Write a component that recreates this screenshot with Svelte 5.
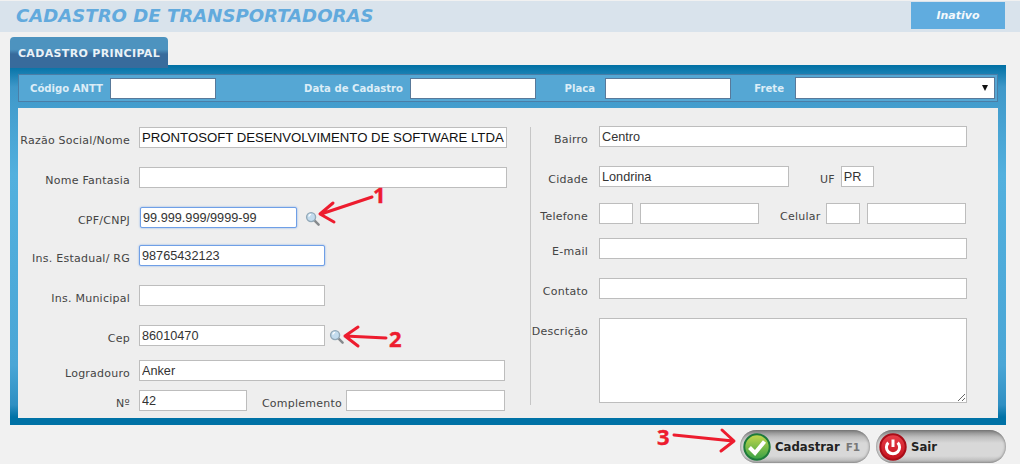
<script lang="ts">
  // annotation arrows drawn over the form
  const arrows = [
    { d: 'M372 197 L321 214 M333 203 L320 214 L334 222' },
    { d: 'M386 338 L345 336 M358 327 L345 336 L358 346' },
    { d: 'M674 435 L733 441 M722 430 L734 441 L721 451' },
  ];
</script>

<div class="page">
  <header class="topbar">
    <h1>CADASTRO DE TRANSPORTADORAS</h1>
    <span class="status">Inativo</span>
  </header>

  <nav class="tabs"><span class="tab">CADASTRO PRINCIPAL</span></nav>

  <section class="panel">
    <div class="filters">
      <label class="f1">Código ANTT <input class="w106" /></label>
      <label class="f2">Data de Cadastro <input class="w126" /></label>
      <label class="f3">Placa <input class="w126" /></label>
      <label class="f4">Frete
        <span class="select"><i></i></span>
      </label>
    </div>

    <div class="content">
      <div class="col left">
        <div class="row"><label>Razão Social/Nome</label><input class="w368 strong" value="PRONTOSOFT DESENVOLVIMENTO DE SOFTWARE LTDA" /></div>
        <div class="row"><label>Nome Fantasia</label><input class="w368" /></div>
        <div class="row">
          <label>CPF/CNPJ</label><input class="w157 focus" value="99.999.999/9999-99" />
          <svg class="lens cpf" viewBox="0 0 16 16" width="15" height="15">
            <path d="M10 10 L14.5 14.5" stroke="#85898c" stroke-width="2.6" stroke-linecap="round" />
            <circle cx="6.5" cy="6.5" r="4.8" fill="#c3dcee" stroke="#93a9b8" stroke-width="1.5" />
            <path d="M4 6 A3 3 0 0 1 6.5 3.6" fill="none" stroke="#fff" stroke-width="1.2" />
          </svg>
        </div>
        <div class="row"><label>Ins. Estadual/ RG</label><input class="w186 focus" value="98765432123" /></div>
        <div class="row"><label>Ins. Municipal</label><input class="w186" /></div>
        <div class="row">
          <label>Cep</label><input class="w186" value="86010470" />
          <svg class="lens" viewBox="0 0 16 16" width="15" height="15">
            <path d="M10 10 L14.5 14.5" stroke="#85898c" stroke-width="2.6" stroke-linecap="round" />
            <circle cx="6.5" cy="6.5" r="4.8" fill="#c3dcee" stroke="#93a9b8" stroke-width="1.5" />
            <path d="M4 6 A3 3 0 0 1 6.5 3.6" fill="none" stroke="#fff" stroke-width="1.2" />
          </svg>
        </div>
        <div class="row"><label>Logradouro</label><input class="w366" value="Anker" /></div>
        <div class="row">
          <label>Nº</label><input class="w108" value="42" />
          <label class="inline">Complemento</label><input class="w159" />
        </div>
      </div>

      <div class="col right">
        <div class="row"><label>Bairro</label><input class="w368" value="Centro" /></div>
        <div class="row">
          <label>Cidade</label><input class="w190" value="Londrina" />
          <label class="uf">UF</label><input class="w33" value="PR" />
        </div>
        <div class="row">
          <label>Telefone</label><input class="w34" />
          <input class="w119" />
          <label class="cel">Celular</label><input class="w34" />
          <input class="w99" />
        </div>
        <div class="row"><label>E-mail</label><input class="w368" /></div>
        <div class="row"><label>Contato</label><input class="w368" /></div>
        <div class="row"><label>Descrição</label><textarea></textarea></div>
      </div>
    </div>
  </section>

  <footer class="actions">
    <button>
      <svg viewBox="0 0 28 28" width="28" height="28">
        <defs>
          <linearGradient id="ok" x1="0" y1="0" x2="0" y2="1">
            <stop offset="0" stop-color="#c5d94c" />
            <stop offset="1" stop-color="#36a045" />
          </linearGradient>
        </defs>
        <circle cx="14" cy="14" r="12.7" fill="url(#ok)" stroke="#1d7a3a" stroke-width="2" />
        <path d="M6.5 14.5 L12 20 L21.5 8.5" fill="none" stroke="#fff" stroke-width="4" />
      </svg>
      <b>Cadastrar</b><small>F1</small>
    </button>
    <button>
      <svg viewBox="0 0 28 28" width="28" height="28">
        <defs>
          <linearGradient id="off" x1="0" y1="0" x2="0" y2="1">
            <stop offset="0" stop-color="#e8404a" />
            <stop offset="1" stop-color="#c4101c" />
          </linearGradient>
        </defs>
        <circle cx="14" cy="14" r="12.7" fill="url(#off)" stroke="#a80d18" stroke-width="2" />
        <path d="M9.3 9.6 A6.6 6.6 0 1 0 18.7 9.6" fill="none" stroke="#fff" stroke-width="3" />
        <path d="M14 6.5 V14" stroke="#fff" stroke-width="3" />
      </svg>
      <b>Sair</b>
    </button>
  </footer>

  <!-- annotations sit on top of the screen -->
  <svg class="marks" width="1020" height="464">
    {#each arrows as a}
      <path d={a.d} fill="none" stroke="#ed1c2e" stroke-width="3" stroke-linecap="round" stroke-linejoin="round" />
    {/each}
  </svg>
  <span class="num n1">1</span>
  <span class="num n2">2</span>
  <span class="num n3">3</span>
</div>

<style>
  :global(body) {
    margin: 0;
    background: #f1f1f1;
  }

  .page {
    position: relative;
    width: 1020px;
    height: 464px;
    overflow: hidden;
    font-family: "DejaVu Sans", sans-serif;
    font-size: 11px;
    color: #444;
  }

  .topbar {
    display: flex;
    justify-content: space-between;
    margin-top: 1px;
    height: 31px;
    padding: 1px 15px 0 16px;
    box-sizing: border-box;
    background: #d9e3ec;
  }

  h1 {
    margin: 3px 0 0;
    font-size: 18.1px;
    line-height: 22px;
    font-weight: bold;
    font-style: italic;
    color: #62aadd;
  }

  .status {
    width: 94px;
    height: 27px;
    background: #60acdf;
    color: #f4f9fc;
    font-size: 11px;
    font-weight: bold;
    font-style: italic;
    text-align: center;
    line-height: 27px;
  }

  .tabs {
    height: 33px;
    padding: 5px 0 0 10px;
    box-sizing: border-box;
    position: relative;
    z-index: 1;
  }

  .tab {
    display: block;
    width: 158px;
    height: 31px;
    box-sizing: border-box;
    padding-top: 10px;
    border-radius: 4px 4px 0 0;
    background: linear-gradient(#4d93bf 0, #4d93bf 40%, #386b9c 55%, #386b9c 100%);
    color: #e9f1f7;
    font-size: 11px;
    letter-spacing: 0.35px;
    font-weight: bold;
    text-align: center;
    line-height: 14px;
  }

  .panel {
    width: 996px;
    height: 360px;
    margin: 0 0 0 10px;
    padding: 9px 8px 7px;
    box-sizing: border-box;
    background: linear-gradient(#0070a4 0, #3f98c9 22px, #52b0de 110px, #4aa6d6 300px, #2f8fc2 340px, #0072a6 352px);
  }

  .filters {
    display: flex;
    height: 28px;
    box-sizing: border-box;
    border: 1px solid #4a7ea7;
    background: #55a7d4;
    color: #dcedf7;
    font-size: 10.1px;
    font-weight: bold;
  }

  .filters label {
    display: flex;
    align-items: center;
    justify-content: flex-end;
    gap: 7px;
    white-space: nowrap;
  }

  .filters input {
    height: 21px;
    border: 1px solid #58799a;
    background: #fff;
    box-sizing: border-box;
  }

  .f1 { width: 197px; }
  .f2 { width: 320px; }
  .f3 { width: 195px; gap: 10px !important; }
  .f4 { width: 264px; gap: 11px !important; }

  .select {
    display: block;
    position: relative;
    width: 200px;
    height: 22px;
    box-sizing: border-box;
    border: 1px solid #58799a;
    background: #fff;
  }

  .select i {
    position: absolute;
    right: 6px;
    top: 7px;
    border: 3px solid transparent;
    border-top: 6px solid #111;
    border-bottom: 0;
  }

  .content {
    display: flex;
    height: 310px;
    margin-top: 6px;
    background: #eee;
    box-sizing: border-box;
    padding-top: 19px;
  }

  .col {
    display: grid;
    align-items: start;
  }

  .left {
    width: 512px;
    height: 278px;
    border-right: 1px solid #c6c6c6;
    grid-template-rows: 40px 40px 38px 40px 40px 35px 30px 21px;
  }

  .right {
    margin-top: -1px;
    grid-template-rows: 40px 37px 35px 40px 40px 85px;
  }

  .row {
    display: flex;
    align-items: flex-start;
  }

  .row label {
    box-sizing: border-box;
    letter-spacing: 0.24px;
    line-height: 14px;
    padding-top: 7px;
    text-align: right;
    white-space: nowrap;
  }

  .left > .row > label:first-child {
    width: 112px;
    margin-right: 9px;
  }

  .right > .row > label:first-child {
    width: 57px;
    margin-right: 11px;
  }

  .row label.inline {
    width: 95px;
    margin-right: 4px;
  }

  .row label.uf { margin: 0 6px 0 31px; }
  .row label.cel { margin: 0 6px 0 21px; }

  .row input, textarea {
    display: block;
    height: 21px;
    margin: 0;
    padding: 0 2px;
    box-sizing: border-box;
    border: 1px solid #bdbdbd;
    border-radius: 0;
    outline: 0;
    background: #fff;
    font-family: "Liberation Sans", sans-serif;
    font-size: 12.7px;
    color: #333;
  }

  .row input.strong { color: #111; font-size: 13.2px; }

  .row input.focus {
    border: 1px solid #6f9fe6;
    border-radius: 2px;
    box-shadow: 0 0 2px #7ba7e8;
  }

  .w157 { margin-left: 1px !important; }

  .row input + input { margin-left: 7px; }

  .w33 { width: 33px; }
  .w34 { width: 34px; }
  .w99 { width: 99px; }
  .w106 { width: 106px; }
  .w108 { width: 108px; }
  .w119 { width: 119px; }
  .w126 { width: 126px; }
  .w157 { width: 157px; }
  .w159 { width: 159px; }
  .w186 { width: 186px; }
  .w190 { width: 190px; }
  .w366 { width: 366px; }
  .w368 { width: 368px; }

  textarea {
    width: 368px;
    height: 85px;
    resize: both;
  }

  .lens { margin: 4px 0 0 4px; }
  .lens.cpf { margin-left: 8px; }

  .actions {
    display: flex;
    justify-content: flex-end;
    gap: 6px;
    width: 1006px;
    margin-top: 5px;
  }

  button {
    display: flex;
    align-items: center;
    width: 130px;
    height: 33px;
    padding: 0 0 0 3px;
    border: 0;
    border-radius: 17px;
    background: linear-gradient(#7f7f7f 0, #bdbdbd 7px, #d8d8d8 13px, #d8d8d8 26px, #b0b0b0 33px);
    box-shadow: inset 0 0 3px #666;
    font-family: "DejaVu Sans", sans-serif;
    color: #222;
  }

  button b {
    margin-left: 4px;
    font-size: 11.7px;
  }

  button small {
    margin-left: 6px;
    font-size: 10.5px;
    font-weight: bold;
    color: #777;
  }

  .marks {
    position: absolute;
    left: 0;
    top: 0;
    pointer-events: none;
  }

  .num {
    position: absolute;
    color: #ed1c2e;
    font-family: "Open Sans", sans-serif;
    font-size: 22px;
    font-weight: bold;
    line-height: 22px;
    -webkit-text-stroke: 0.4px #ed1c2e;
  }

  .n1 { left: 373px; top: 183px; }
  .n2 { left: 389px; top: 327px; }
  .n3 { left: 657px; top: 425px; }
</style>
